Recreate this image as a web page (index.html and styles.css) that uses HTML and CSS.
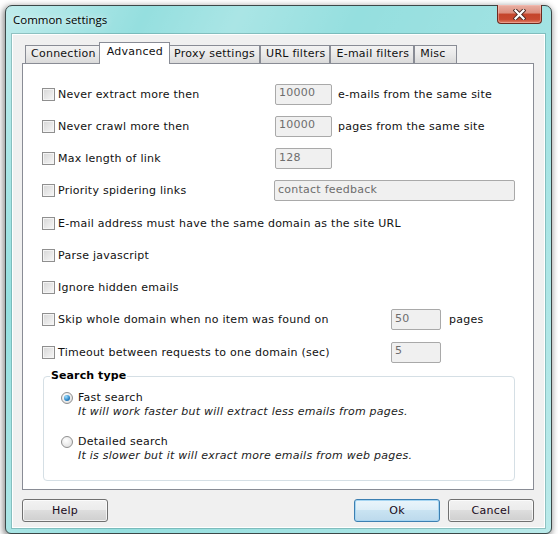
FILE: index.html
```html
<!DOCTYPE html>
<html lang="en">
<head>
  <meta charset="UTF-8" />
  <title>Common settings</title>
  <link rel="stylesheet" href="styles.css">
</head>
<body>

  <div class="window">
    <div class="titlebar">
      <span class="title">Common settings</span>
      <button class="close-btn" aria-label="Close">
        <svg width="13" height="11" viewBox="0 0 13 11">
          <path d="M2.5 1.5 L10.5 9.5 M10.5 1.5 L2.5 9.5" stroke="#4a2a24" stroke-width="4" stroke-linecap="square" fill="none"/>
          <path d="M2.5 1.5 L10.5 9.5 M10.5 1.5 L2.5 9.5" stroke="#ffffff" stroke-width="2.2" stroke-linecap="square" fill="none"/>
        </svg>
      </button>
    </div>

    <div class="client">
      <div class="tabs">
        <div class="tab">Connection</div>
        <div class="tab active">Advanced</div>
        <div class="tab">Proxy settings</div>
        <div class="tab">URL filters</div>
        <div class="tab">E-mail filters</div>
        <div class="tab misc">Misc</div>
      </div>

      <div class="panel">
        <div class="row">
          <label class="opt"><span class="check"></span>Never extract more then</label>
          <input class="field" type="text" value="10000" disabled />
          <span class="after">e-mails from the same site</span>
        </div>
        <div class="row">
          <label class="opt"><span class="check"></span>Never crawl more then</label>
          <input class="field" type="text" value="10000" disabled />
          <span class="after">pages from the same site</span>
        </div>
        <div class="row">
          <label class="opt"><span class="check"></span>Max length of link</label>
          <input class="field" type="text" value="128" disabled />
        </div>
        <div class="row">
          <label class="opt"><span class="check"></span>Priority spidering links</label>
          <input class="field long" type="text" value="contact feedback" disabled />
        </div>
        <div class="row">
          <label class="opt"><span class="check"></span>E-mail address must have the same domain as the site URL</label>
        </div>
        <div class="row">
          <label class="opt"><span class="check"></span>Parse javascript</label>
        </div>
        <div class="row">
          <label class="opt"><span class="check"></span>Ignore hidden emails</label>
        </div>
        <div class="row">
          <label class="opt wide"><span class="check"></span>Skip whole domain when no item was found on</label>
          <input class="field short" type="text" value="50" disabled />
          <span class="after pages">pages</span>
        </div>
        <div class="row">
          <label class="opt wide"><span class="check"></span>Timeout between requests to one domain (sec)</label>
          <input class="field short" type="text" value="5" disabled />
        </div>

        <fieldset class="group">
          <legend>Search type</legend>
          <div class="choice">
            <span class="radio checked"></span>
            <div>
              <div>Fast search</div>
              <div class="hint">It will work faster but will extract less emails from pages.</div>
            </div>
          </div>
          <div class="choice">
            <span class="radio"></span>
            <div>
              <div>Detailed search</div>
              <div class="hint">It is slower but it will exract more emails from web pages.</div>
            </div>
          </div>
        </fieldset>
      </div>

      <div class="actions">
        <button class="btn">Help</button>
        <span class="spacer"></span>
        <button class="btn default">Ok</button>
        <button class="btn">Cancel</button>
      </div>
    </div>
  </div>

</body>
</html>
```

FILE: styles.css
```css
body {
  margin: 0;
  background: #ffffff;
  font-family: "DejaVu Sans", Verdana, sans-serif;
  font-size: 11px;
  letter-spacing: 0.25px;
  color: #111;
}

.window {
  box-sizing: border-box;
  width: 547px;
  height: 529px;
  margin: 5px 0 0 5px;
  border: 1px solid #3c4848;
  border-radius: 7px 7px 6px 6px;
  background:
    linear-gradient(115deg, rgba(255,255,255,0.4) 0%, rgba(255,255,255,0) 18%, rgba(255,255,255,0.2) 30%, rgba(255,255,255,0) 45%, rgba(255,255,255,0.15) 75%, rgba(255,255,255,0.35) 100%),
    #95dfdf;
  box-shadow: -1px 2px 6px 1px rgba(0, 0, 0, 0.45);
  display: flex;
  flex-direction: column;
}

.titlebar {
  height: 28px;
  display: flex;
  justify-content: space-between;
  align-items: flex-start;
  padding-left: 7px;
}

.title {
  margin-top: 6px;
  font-family: "Open Sans", "Noto Sans", sans-serif;
  font-size: 11.5px;
  letter-spacing: 0;
  line-height: 16px;
  color: #000;
  text-shadow: 0 0 6px rgba(255, 255, 255, 0.9);
}

.close-btn {
  width: 45px;
  height: 19px;
  margin-right: 9px;
  margin-top: -1px;
  padding: 0;
  border: 1px solid #6b2a20;
  border-top: none;
  border-radius: 0 0 4px 4px;
  background: linear-gradient(#e9b0a4 0%, #dc8f7e 45%, #c4452b 50%, #c84a30 80%, #e0826a 100%);
  box-shadow: inset 0 0 0 1px rgba(255, 200, 190, 0.45);
  display: flex;
  justify-content: center;
  align-items: center;
}

.client {
  flex: 1;
  margin: 0 6px 5px 6px;
  border: 1px solid #ffffff;
  box-shadow: 0 0 0 1px rgba(70, 120, 120, 0.35);
  background: #f0f0f0;
  padding: 7px 10px 0 9px;
  display: flex;
  flex-direction: column;
}

.tabs {
  display: flex;
  align-items: flex-end;
  padding-left: 3px;
  height: 21px;
  position: relative;
  z-index: 1;
}

.tab {
  box-sizing: border-box;
  height: 18px;
  line-height: 16px;
  padding: 0 4px 0 5px;
  border: 1px solid #898c95;
  border-bottom: none;
  background: linear-gradient(#f3f3f3, #e9e9e9 50%, #dadada);
  white-space: nowrap;
}

.tab.active {
  height: 22px;
  margin: 0 -2px -1px -2px;
  padding: 0 6px 0 7px;
  line-height: 17px;
  background: #ffffff;
  position: relative;
}

.tab.misc {
  min-width: 43px;
}

.panel {
  box-sizing: border-box;
  height: 427px;
  border: 1px solid #898c95;
  background: #ffffff;
  padding: 14px 0 0 19px;
}

.row {
  height: 32.25px;
  display: flex;
  align-items: center;
}

.opt {
  width: 233px;
  flex-shrink: 0;
  display: flex;
  align-items: center;
  white-space: nowrap;
}

.opt.wide {
  width: 349px;
}

.check {
  box-sizing: border-box;
  flex-shrink: 0;
  width: 13px;
  height: 13px;
  margin-right: 3px;
  border: 1px solid #8f8f8f;
  background: linear-gradient(135deg, #d6d6d6, #f7f7f7);
  box-shadow: inset 0 0 0 1px #f4f4f4;
}

.field {
  box-sizing: border-box;
  width: 57px;
  height: 21px;
  padding: 0 0 3px 3px;
  border: 1px solid #a9a9a9;
  border-radius: 2px;
  background: #f0f0f0;
  color: #6d6d6d;
  font-family: inherit;
  font-size: 11px;
  letter-spacing: 0.25px;
}

.field.long {
  width: 241px;
  margin-left: -1px;
}

.field.short {
  width: 50px;
}

.after {
  margin-left: 6px;
}

.after.pages {
  margin-left: 8px;
}

.group {
  width: 472px;
  box-sizing: border-box;
  margin: 1px 0 0 1px;
  padding: 8px 0 17px 17px;
  border: 1px solid #d5dfe5;
  border-radius: 4px;
}

.group legend {
  margin-left: -11px;
  padding: 0 1px;
  font-weight: bold;
  line-height: 14px;
  letter-spacing: 0.1px;
  color: #000;
}

.choice {
  display: flex;
  align-items: flex-start;
  line-height: 14px;
}

.choice + .choice {
  margin-top: 16px;
}

.hint {
  font-style: italic;
  color: #222;
}

.radio {
  box-sizing: border-box;
  flex-shrink: 0;
  width: 12px;
  height: 12px;
  margin: 1px 5px 0 0;
  border: 1px solid #8f8f8f;
  border-radius: 50%;
  background: radial-gradient(circle at 40% 35%, #ffffff, #d9d9d9);
  display: flex;
  justify-content: center;
  align-items: center;
}

.radio.checked::after {
  content: "";
  width: 6px;
  height: 6px;
  border-radius: 50%;
  background: radial-gradient(circle at 35% 30%, #9fe0ff, #2a82c4 60%, #135a93);
}

.actions {
  display: flex;
  margin-top: 9px;
  gap: 8px;
}

.spacer {
  flex: 1;
}

.btn {
  width: 86px;
  height: 23px;
  padding: 0;
  border: 1px solid #707070;
  border-radius: 3px;
  background: linear-gradient(#f2f2f2 0%, #ebebeb 50%, #dddddd 50%, #cfcfcf 100%);
  box-shadow: inset 0 0 0 1px rgba(255, 255, 255, 0.7);
  font-family: inherit;
  font-size: 11px;
  letter-spacing: 0.25px;
  color: #1a0a1a;
}

.btn.default {
  border-color: #3c7fb1;
  background: linear-gradient(#eaf5fb 0%, #dcedf7 50%, #c9e3f2 50%, #bcd9ec 100%);
  box-shadow: inset 0 0 0 1px #a5d5f2;
}
```
